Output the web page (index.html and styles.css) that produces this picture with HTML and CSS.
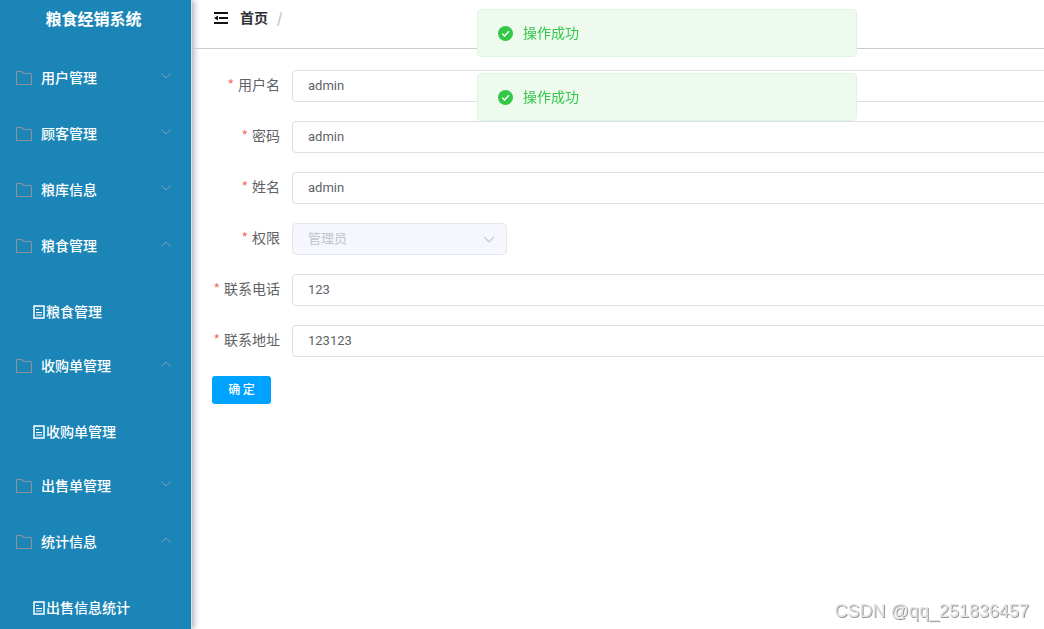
FILE: index.html
```html
<!DOCTYPE html>
<html lang="zh-CN">
<head>
<meta charset="utf-8">
<meta name="viewport" content="width=device-width, initial-scale=1">
<title>粮食经销系统</title>
<link rel="stylesheet" href="styles.css">
</head>
<body>
<svg class="defs" aria-hidden="true">
  <symbol id="folder" viewBox="0 0 18 16"><path d="M1.500 14.500V2.500q0-1 1-1H6.500l2 2H15.500q1 0 1 1V14.500z" fill="none" stroke="currentColor" stroke-width="1.200"/></symbol>
  <symbol id="doc" viewBox="0 0 12 14"><path d="M1 1h10v12H1z" fill="none" stroke="currentColor" stroke-width="1.500"/><path d="M3 4.500h3M3 7.500h6M3 10h6" fill="none" stroke="currentColor"/></symbol>
  <symbol id="down" viewBox="0 0 10 6"><path d="M.7.800 5 5 9.300.8" fill="none" stroke="currentColor"/></symbol>
  <symbol id="up" viewBox="0 0 10 6"><path d="M.7 5.200 5 1l4.300 4.200" fill="none" stroke="currentColor"/></symbol>
  <symbol id="check" viewBox="0 0 14 14"><circle cx="7" cy="7" r="7" fill="currentColor"/><path d="m4 7.200 2.200 2.100L10.200 5" fill="none" stroke="#fff" stroke-width="1.400"/></symbol>
</svg>
<div class="app">
  <nav class="sidebar">
    <h1 class="brand">粮食经销系统</h1>
    <button class="menu-item" type="button"><svg class="folder"><use href="#folder"/></svg><span>用户管理</span><svg class="arrow"><use href="#down"/></svg></button>
    <button class="menu-item" type="button"><svg class="folder"><use href="#folder"/></svg><span>顾客管理</span><svg class="arrow"><use href="#down"/></svg></button>
    <button class="menu-item" type="button"><svg class="folder"><use href="#folder"/></svg><span>粮库信息</span><svg class="arrow"><use href="#down"/></svg></button>
    <button class="menu-item" type="button"><svg class="folder"><use href="#folder"/></svg><span>粮食管理</span><svg class="arrow"><use href="#up"/></svg></button>
    <div class="submenu"><a class="sub-item" href="#"><svg class="doc"><use href="#doc"/></svg><span>粮食管理</span></a></div>
    <button class="menu-item" type="button"><svg class="folder"><use href="#folder"/></svg><span>收购单管理</span><svg class="arrow"><use href="#up"/></svg></button>
    <div class="submenu"><a class="sub-item" href="#"><svg class="doc"><use href="#doc"/></svg><span>收购单管理</span></a></div>
    <button class="menu-item" type="button"><svg class="folder"><use href="#folder"/></svg><span>出售单管理</span><svg class="arrow"><use href="#down"/></svg></button>
    <button class="menu-item" type="button"><svg class="folder"><use href="#folder"/></svg><span>统计信息</span><svg class="arrow"><use href="#up"/></svg></button>
    <div class="submenu"><a class="sub-item" href="#"><svg class="doc"><use href="#doc"/></svg><span>出售信息统计</span></a></div>
  </nav>
  <div class="content">
    <header class="topbar">
      <button class="fold" type="button" aria-label="折叠菜单"><svg viewBox="0 0 14 12"><path d="M0 1h14M5 6h9M0 11h14" fill="none" stroke="currentColor" stroke-width="2"/><path d="M0 6l4-2.500v5z" fill="currentColor"/></svg></button>
      <a class="crumb" href="#">首页</a><span class="slash">/</span>
    </header>
    <main>
      <form class="form">
        <div class="row"><label for="username">用户名</label><input id="username" type="text" value="admin"></div>
        <div class="row"><label for="password">密码</label><input id="password" type="text" value="admin"></div>
        <div class="row"><label for="name">姓名</label><input id="name" type="text" value="admin"></div>
        <div class="row"><label for="role">权限</label><div class="select"><select id="role" disabled><option>管理员</option></select><svg><use href="#down"/></svg></div></div>
        <div class="row"><label for="phone">联系电话</label><input id="phone" type="text" value="123"></div>
        <div class="row"><label for="address">联系地址</label><input id="address" type="text" value="123123"></div>
        <button class="submit" type="button">确 定</button>
      </form>
    </main>
  </div>
</div>
<div class="messages">
  <div class="message" role="alert"><svg><use href="#check"/></svg><span>操作成功</span></div>
  <div class="message" role="alert"><svg><use href="#check"/></svg><span>操作成功</span></div>
</div>
<div class="watermark">CSDN @qq_251836457</div>
</body>
</html>
```
FILE: styles.css
```css
* { box-sizing: border-box; }
body {
  margin: 0;
  overflow: hidden;
  background: #fff;
  color: #606266;
  font: 14px/20px "Noto Sans CJK SC", sans-serif;
}
button, input, select { font: inherit; }
a { color: inherit; text-decoration: none; }
svg { flex: none; }
.defs { display: none; }
.app { display: flex; height: 100vh; }

.sidebar {
  flex: none;
  width: 192px;
  overflow: hidden;
  border-right: 1px solid #d5e4ec;
  background: #1a85b6;
  box-shadow: 2px 0 6px rgba(0, 21, 61, .35);
  color: #fff;
}
.brand {
  margin: 0;
  padding: 8px 4px 22px 0;
  font-size: 16px;
  line-height: 20px;
  font-weight: 700;
  text-align: center;
}
.menu-item {
  display: flex;
  align-items: center;
  width: 100%;
  height: 56px;
  padding: 0 20px 0 15px;
  border: 0;
  background: none;
  color: inherit;
  font-weight: 500;
  text-align: left;
}
.menu-item span { flex: 1; padding-bottom: 2px; }
.folder { width: 18px; height: 16px; margin-right: 8px; color: #8a93a0; }
.arrow { width: 10px; height: 6px; margin-bottom: 4px; color: #809fb6; }
.submenu { padding: 13px 0 1px; }
.sub-item {
  display: flex;
  align-items: center;
  height: 50px;
  padding-left: 33px;
  font-weight: 500;
}
.sub-item span { padding-bottom: 2px; }
.doc { width: 12px; height: 14px; margin-right: 1px; }

.content { flex: 1; min-width: 0; overflow-x: clip; }
.topbar {
  display: flex;
  align-items: center;
  height: 49px;
  padding: 0 22px 12px;
  border-bottom: 1px solid #ccc;
}
.fold { display: flex; margin-right: 12px; padding: 0; border: 0; background: none; color: #111; }
.fold svg { width: 14px; height: 12px; }
.crumb { padding-bottom: 2px; color: #303133; font-weight: 700; }
.slash { margin-left: 9px; padding-bottom: 2px; color: #c0c4cc; font-weight: 700; }

.form { display: grid; gap: 19px; padding: 21px 0 0 20px; margin-right: -20px; }
.row { display: flex; align-items: center; height: 32px; }
.row label {
  display: flex;
  flex: none;
  justify-content: flex-end;
  width: 80px;
  padding: 0 12px 4px 0;
  white-space: nowrap;
}
.row label::before { content: "*"; margin-right: 4px; color: #f56c6c; }
.row input, .row select {
  flex: 1;
  min-width: 0;
  height: 32px;
  padding: 0 15px 2px;
  border: 1px solid #dcdfe6;
  border-radius: 4px;
  background: #fff;
  color: #606266;
  font: 13px Roboto, "Noto Sans CJK SC", sans-serif;
}
.select { position: relative; display: flex; width: 215px; }
.row select {
  appearance: none;
  border-color: #e4e7ed;
  background: #f6f7fe;
  color: #c0c4cc;
  opacity: 1;
}
.select svg { position: absolute; top: 13px; right: 12px; width: 12px; height: 7px; color: #c0c4cc; }
.submit {
  justify-self: start;
  width: 59px;
  height: 28px;
  padding: 0 0 2px;
  border: 0;
  border-radius: 3px;
  background: #00a2ff;
  color: #fff;
  font-size: 12px;
  font-weight: 500;
}

.messages {
  position: fixed;
  top: 9px;
  left: 50%;
  display: grid;
  gap: 16px;
  width: 380px;
  margin-left: -45px;
}
.message {
  display: flex;
  align-items: center;
  gap: 10px;
  height: 48px;
  padding: 0 20px;
  border: 1px solid #dff5df;
  border-radius: 4px;
  background: #eefaee;
  color: #34c748;
}
.message svg { width: 15px; height: 15px; }
.message span { padding-bottom: 2px; }
.watermark {
  position: fixed;
  right: 15px;
  bottom: 8px;
  color: #e2e2e2;
  font: 18px/20px "Liberation Sans", sans-serif;
  text-shadow: 1px 1px 0 #999;
}
```
